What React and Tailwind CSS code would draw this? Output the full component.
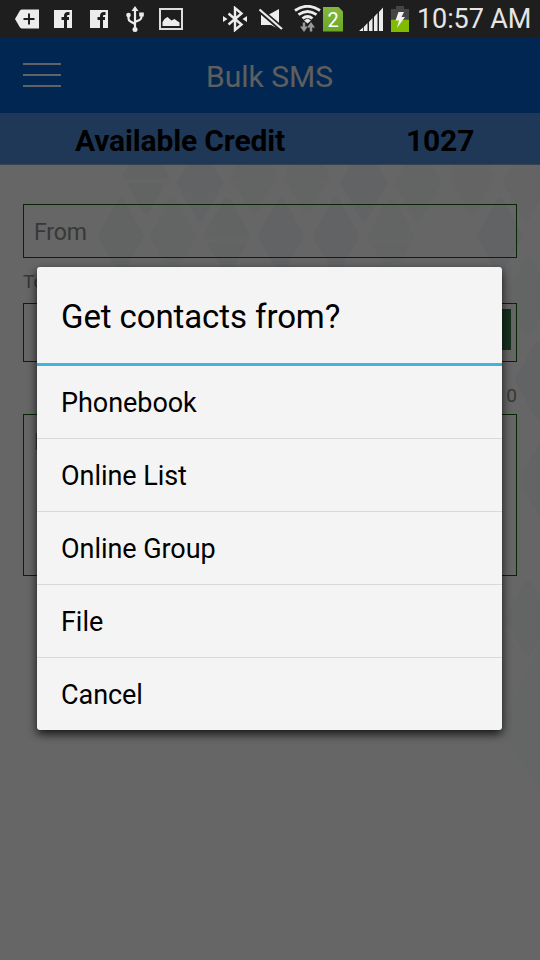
import React from 'react';

const contactSources = ['Phonebook', 'Online List', 'Online Group', 'File', 'Cancel'];

// [center x, center y, fill, split]
const diamonds = [
  [146, 176, '#f6faf9', true],
  [200, 183, '#f4f8f9', false],
  [254, 176, '#f7fafa', true],
  [307, 176, '#f8fafa', true],
  [364, 183, '#f5f8f9', false],
  [418, 183, '#f7f9fa', false],
  [472, 176, '#fafbfb', true],
  [526, 183, '#f9fafa', false],
  [121, 236, '#f6faf8', false],
  [173, 236, '#f8fafa', false],
  [227, 236, '#f5f8f8', true],
  [281, 236, '#f6f8f9', false],
  [336, 236, '#f6f8f9', false],
  [391, 236, '#f8f9f9', true],
  [500, 236, '#f6f8f9', false],
  [528, 296, '#f8f9f9', false],
  [538, 380, '#f6f8f9', false],
  [542, 480, '#f7f9f9', false],
  [528, 618, '#f7f9f9', false],
];

const StatusBar = () => (
  <div className="flex h-[38px] items-center bg-[#1e1e1e] pl-[15px]">
    <svg className="h-5 w-6" viewBox="0 0 24 20" fill="#ececec">
      <path d="M0 10 5 1.500Q6 .5 7 .5h17v19H7q-1 0-2-1z" />
      <path d="M14 4.500v11M8.500 10h11" stroke="#1e1e1e" strokeWidth="2" />
    </svg>
    {[0, 1].map((item) => (
      <svg
        key={item}
        className={item === 0 ? 'ml-[15px] h-[18px] w-[18px]' : 'ml-[18px] h-[18px] w-[18px]'}
        viewBox="0 0 18 18"
      >
        <path d="M0 0h18v18H0z" fill="#ececec" />
        <path d="M15.500 3.500h-1.500q-2.500 0-2.500 2.500V18M7.500 8.500h7.500" fill="none" stroke="#1e1e1e" strokeWidth="3" />
      </svg>
    ))}
    <svg className="ml-[18px] h-[26px] w-[18px]" viewBox="0 0 18 26" fill="none" stroke="#ececec" strokeWidth="2.200">
      <path d="M9 4v19M2.500 9v3.500q0 2 2 3L9 18M15.500 8v3q0 2-2 3L9 16" />
      <path d="m9 0 3.500 5h-7zM13.200 6.500h4.600v4h-4.600z" fill="#ececec" stroke="none" />
      <circle cx="2.500" cy="9" r="2.300" fill="#ececec" stroke="none" />
      <circle cx="9" cy="23.500" r="2.500" fill="#ececec" stroke="none" />
    </svg>
    <svg className="ml-[15px] h-[22px] w-6" viewBox="0 0 24 22">
      <path d="M1 1h22v20H1z" fill="none" stroke="#dedede" strokeWidth="2" />
      <path d="M3.500 18v-4q2-4 5-5l4 3.500 3-1.500q3 2 5 3.500V18z" fill="#ececec" />
    </svg>

    {/* Bluetooth */}
    <svg className="ml-10 h-[26px] w-6" viewBox="0 0 24 26">
      <path d="m5.500 7.500 13 11L12 24V2l6.500 5.500-13 11" fill="none" stroke="#ececec" strokeWidth="2.400" />
      <path d="m0 10 4.500 3L0 16zM24 10l-4.500 3 4.500 3z" fill="#ececec" />
    </svg>
    {/* Muted speaker */}
    <svg className="ml-3 h-[22px] w-6" viewBox="0 0 24 22">
      <path d="M2 7h7l11-6v20l-8-4H2z" fill="#ececec" />
      <path d="M-1 .5 24 22" stroke="#1e1e1e" strokeWidth="5.500" />
      <path d="m.5 1.500 22.500 19.500" stroke="#ececec" strokeWidth="2.200" />
    </svg>
    {/* Wifi with traffic arrows */}
    <svg className="ml-[11px] h-7 w-[27px]" viewBox="0 0 27 28" fill="none" stroke="#ececec" strokeWidth="2.800">
      <path d="M1 5.500q12.500-8.500 25 0M4.500 9.700q9-6.500 18 0M8.500 13.500q5-4 10 0" />
      <path d="m10 15.500 3.500-2 3.500 2-3.500 3z" fill="#ececec" stroke="none" />
      <path d="M10 17.500v6M17 26.500v-6" stroke="#999" strokeWidth="2.500" />
      <path d="M6 21.500h8l-4 5.500zM13 22.500h8l-4-5.500z" fill="#999" stroke="none" />
    </svg>
    <div className="ml-[2px] flex h-[25px] w-5 items-center justify-center bg-linear-to-b from-[#84b83c] to-[#6aa626] text-[20px] leading-none text-white [clip-path:polygon(0_0,75%_0,100%_20%,100%_100%,0_100%)]">
      <span className="pt-0.5">2</span>
    </div>
    <svg className="ml-4 h-6 w-6" viewBox="0 0 24 24" fill="#ececec">
      <path d="M0 24 4 20.500V24zM4.800 20l3.700-4v8H4.800zM10 15l3.500-4v13H10zM15 10l3.500-4v18H15zM20 5 24 .5V24h-4z" />
    </svg>
    <svg className="ml-2 h-[26px] w-[18px]" viewBox="0 0 18 26">
      <path d="M5 0h8v3h5v10H0V3h5z" fill="#444" />
      <path d="M0 13.500h18V26H0z" fill="#80bb00" />
      <path d="M7.500 6H13l-2.500 5H14L6 22l2-7.500H4.500z" fill="#f1f1f1" />
    </svg>
    <span className="ml-[8px] whitespace-nowrap pt-px text-[27px] leading-none tracking-[-0.1px] text-[#e6e6e6]">
      10:57 AM
    </span>
  </div>
);

const Pattern = () => (
  <svg className="absolute inset-0 h-full w-full" viewBox="0 165 540 795">
    {diamonds.map(([x, y, fill, split]) => (
      <g key={`${x}-${y}`}>
        <path
          d={`M${x} ${y - 34}l19 34-19 34-19-34z`}
          fill={fill}
          stroke={fill}
          strokeWidth="8"
          strokeLinejoin="round"
        />
        {split && <path d={`M${x - 24} ${y + 5}h48`} stroke="#fcfdfd" strokeWidth="4" />}
      </g>
    ))}
    <path d="M540 640v150l-40-60z" fill="#fbfcfc" />
  </svg>
);

const SmsForm = () => (
  <div className="relative flex-1 overflow-hidden bg-white">
    <Pattern />
    <div className="relative flex flex-col px-[23px] pt-[39px] text-[#8c8c8c]">
      <div className="flex h-[54px] items-center border border-[#14600f] pt-1 pl-2.5 text-[23px] tracking-[-0.1px]">
        From
      </div>
      <div className="mt-3 h-6 text-[19px] leading-6">To</div>
      <div className="mt-[9px] flex h-[59px] justify-end border border-[#14600f] pt-[5px] pr-[5px]">
        <div className="h-[41px] w-16 bg-[#37784f]" />
      </div>
      <div className="mt-[22px] h-6 text-right text-[19px] leading-6">0</div>
      <div className="mt-[6px] h-[162px] border border-[#14600f] pt-[14px] pl-2.5 text-[23px] leading-7">
        Message
      </div>
    </div>
  </div>
);

const ContactsDialog = () => (
  <div className="absolute inset-0 flex items-center justify-center bg-black/60 pr-px pb-px">
    <div className="w-[465px] overflow-hidden rounded-[3px] bg-[#f4f4f4] text-black shadow-[0_4px_10px_rgba(0,0,0,0.8)]">
      <h2 className="flex h-[99px] items-center border-b-[3px] border-[#3fb4dc] pt-[3px] pl-6 text-[33px] tracking-[-0.1px]">
        Get contacts from?
      </h2>
      <ul className="divide-y divide-[#d9d9d9]">
        {contactSources.map((source) => (
          <li key={source} className="flex h-[73px] items-center pt-0.5 pl-6 text-[27px] tracking-[-0.05px] last:h-[72px]">
            {source}
          </li>
        ))}
      </ul>
    </div>
  </div>
);

const App = () => (
  <div className="flex h-[960px] w-[540px] flex-col overflow-hidden font-['Roboto',sans-serif]">
    <StatusBar />
    <div className="relative flex flex-1 flex-col">
      <header className="flex h-[75px] items-center bg-[#005fcb] pl-[23px]">
        <div className="flex w-[38px] flex-col gap-[9px] pb-0.5">
          <span className="h-0.5 bg-[#f2f6fc]" />
          <span className="h-0.5 bg-[#f2f6fc]" />
          <span className="h-0.5 bg-[#f2f6fc]" />
        </div>
        <h1 className="ml-[145px] pt-0.5 text-[30px] text-[#ececec]">Bulk SMS</h1>
      </header>
      <div className="flex h-[52px] items-center border-b border-[#86a5cc] bg-[#4e8cdc] pt-1 pl-[75px] text-[30px] font-bold tracking-[-0.15px] text-black">
        <span className="w-[331px]">Available Credit</span>
        <span>1027</span>
      </div>
      <SmsForm />
      <ContactsDialog />
    </div>
  </div>
);

export default App;
